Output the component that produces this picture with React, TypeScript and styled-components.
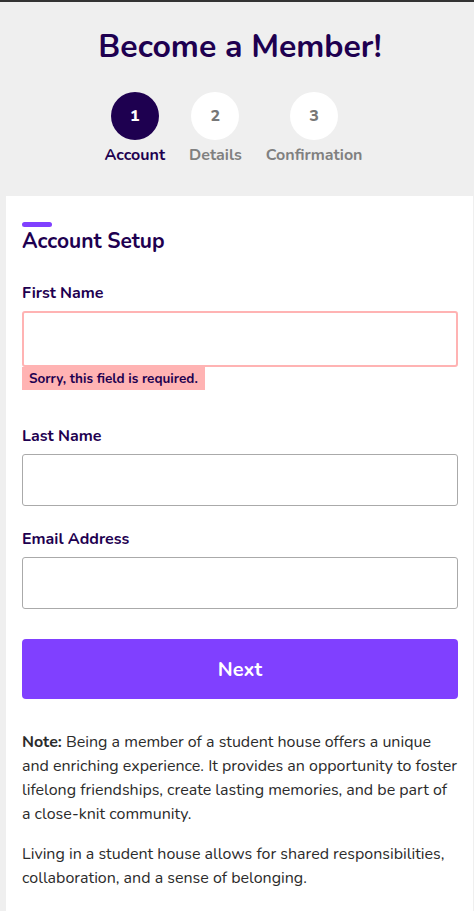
import React from "react";
import styled, { createGlobalStyle } from "styled-components";

const FONT = `"Nunito", "Lato", "Noto Sans", sans-serif`;
const NAVY = "#1e0050";
const PURPLE = "#8040ff";

const Global = createGlobalStyle`
  * { box-sizing: border-box; }
  html, body { margin: 0; padding: 0; }
  body {
    background: #efefef;
    border-top: 2px solid #333;
    font-family: ${FONT};
    color: ${NAVY};
  }
`;

const Page = styled.div`
  display: flex;
  flex-direction: column;
`;

const Header = styled.header`
  display: flex;
  flex-direction: column;
  align-items: center;
  padding: 27px 0 31px;
`;

const Title = styled.h1`
  margin: 0 0 0 6px;
  font-size: 32px;
  line-height: 36px;
  font-weight: 700;
  color: ${NAVY};
`;

const Steps = styled.ol`
  list-style: none;
  margin: 27px 7px 0 0;
  padding: 0;
  display: flex;
  gap: 24px;
`;

const Step = styled.li`
  display: flex;
  flex-direction: column;
  align-items: center;
  gap: 5px;
`;

const Circle = styled.span<{ $active?: boolean }>`
  width: 48px;
  height: 48px;
  border-radius: 50%;
  display: flex;
  align-items: center;
  justify-content: center;
  font-size: 16px;
  font-weight: 800;
  background: ${(p) => (p.$active ? NAVY : "#fff")};
  color: ${(p) => (p.$active ? "#fff" : "#777")};
`;

const StepLabel = styled.span<{ $active?: boolean }>`
  font-size: 16px;
  line-height: 20px;
  font-weight: 700;
  color: ${(p) => (p.$active ? NAVY : "#808080")};
`;

const Card = styled.main`
  background: #fff;
  margin: 0 1px 0 6px;
  padding: 26px 15px 32px 16px;
`;

const Accent = styled.div`
  width: 30px;
  height: 5px;
  border-radius: 3px;
  background: ${PURPLE};
  margin-bottom: 1px;
`;

const SectionTitle = styled.h2`
  margin: 0 0 29px;
  font-size: 21px;
  line-height: 26px;
  font-weight: 700;
  color: ${NAVY};
`;

const Field = styled.div`
  display: flex;
  flex-direction: column;
  align-items: flex-start;
  margin-bottom: 23px;
`;

const Label = styled.label`
  font-size: 16px;
  line-height: 20px;
  font-weight: 700;
  color: ${NAVY};
  margin-bottom: 8px;
`;

const Input = styled.input<{ $error?: boolean }>`
  width: 100%;
  height: ${(p) => (p.$error ? "56px" : "52px")};
  border: ${(p) => (p.$error ? "2px solid #ffb3b3" : "1px solid #aaa")};
  border-radius: 3px;
  background: #fff;
  font-family: ${FONT};
  font-size: 16px;
  padding: 0 12px;
  outline: none;
`;

const ErrorMsg = styled.span`
  background: #ffb3b3;
  color: ${NAVY};
  font-size: 13.5px;
  line-height: 23px;
  font-weight: 700;
  padding: 0 7px;
  margin-bottom: 13px;
`;

const NextButton = styled.button`
  display: block;
  width: 100%;
  height: 60px;
  margin-top: 30px;
  border: none;
  border-radius: 4px;
  background: ${PURPLE};
  color: #fff;
  font-family: ${FONT};
  font-size: 20px;
  font-weight: 700;
`;

const Note = styled.p`
  margin: 31px 0 0;
  font-size: 16px;
  line-height: 24px;
  color: #2b2b2b;
  & + & { margin-top: 16px; }
`;

export default function App() {
  return (
    <Page>
      <Global />
      <Header>
        <Title>Become a Member!</Title>
        <Steps>
          <Step>
            <Circle $active>1</Circle>
            <StepLabel $active>Account</StepLabel>
          </Step>
          <Step>
            <Circle>2</Circle>
            <StepLabel>Details</StepLabel>
          </Step>
          <Step>
            <Circle>3</Circle>
            <StepLabel>Confirmation</StepLabel>
          </Step>
        </Steps>
      </Header>
      <Card>
        <Accent />
        <SectionTitle>Account Setup</SectionTitle>
        <Field>
          <Label htmlFor="first">First Name</Label>
          <Input id="first" $error />
          <ErrorMsg>Sorry, this field is required.</ErrorMsg>
        </Field>
        <Field>
          <Label htmlFor="last">Last Name</Label>
          <Input id="last" />
        </Field>
        <Field>
          <Label htmlFor="email">Email Address</Label>
          <Input id="email" />
        </Field>
        <NextButton>Next</NextButton>
        <Note>
          <strong>Note:</strong> Being a member of a student house offers a unique and
          enriching experience. It provides an opportunity to foster lifelong friendships,
          create lasting memories, and be part of a close-knit community.
        </Note>
        <Note>
          Living in a student house allows for shared responsibilities, collaboration, and a
          sense of belonging.
        </Note>
      </Card>
    </Page>
  );
}
